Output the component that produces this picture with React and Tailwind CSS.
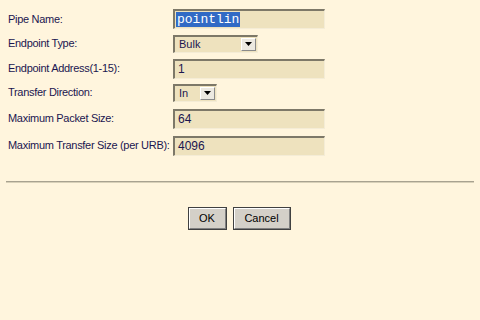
import React from "react";

function Field({ children, w = "w-[152px]" }) {
  return (
    <div className={`${w} h-[20px] bg-[#EEE2BE] border-t-2 border-l-2 border-[#7d7868] border-b border-r border-b-[#f4ecd6] border-r-[#f4ecd6] flex items-center pl-[1px] text-[12px] text-[#1b1650]`}>
      {children}
    </div>
  );
}

function Select({ value, w }) {
  return (
    <div className={`${w} h-[18px] bg-[#EEE2BE] border-t-2 border-l-2 border-[#7d7868] border-b border-r border-b-[#f4ecd6] border-r-[#f4ecd6] flex items-center justify-between text-[11px] text-[#1b1650]`}>
      <span className="pl-[4px]">{value}</span>
      <div className="w-[15px] h-[13px] mr-[1px] bg-[#ECE9E1] border border-t-[#fff] border-l-[#fff] border-b-[#8a8a8a] border-r-[#8a8a8a] flex items-center justify-center">
        <svg width="7" height="4" viewBox="0 0 7 4"><path d="M0 0H7L3.5 4Z" fill="#000" /></svg>
      </div>
    </div>
  );
}

function Button({ children, w }) {
  return (
    <div className={`${w} h-[23px] bg-[#D4D0C8] border border-[#404040] flex`}>
      <div className="flex-1 border-t border-l border-t-white border-l-white border-b border-r border-b-[#808080] border-r-[#808080] flex items-center justify-center text-[11px] text-black">
        {children}
      </div>
    </div>
  );
}

export default function App() {
  const font = { fontFamily: "'Liberation Sans', Arial, sans-serif" };
  const rows = [
    { label: "Pipe Name:", h: "h-[26px]", el: (
      <Field><span className="bg-[#316AC5] text-white leading-[15px] px-[1px]" style={{ fontFamily: "'Liberation Mono', 'Courier New', monospace", fontSize: "13px" }}>pointlin</span></Field>
    ) },
    { label: "Endpoint Type:", h: "h-[23px]", el: <Select value="Bulk" w="w-[85px]" /> },
    { label: "Endpoint Address(1-15):", h: "h-[27px]", el: <Field><span className="pl-[2px]">1</span></Field> },
    { label: "Transfer Direction:", h: "h-[21px]", el: <Select value="In" w="w-[44px]" /> },
    { label: "Maximum Packet Size:", h: "h-[31px]", el: <Field><span className="pl-[2px]">64</span></Field> },
    { label: "Maximum Transfer Size (per URB):", h: "h-[23px]", el: <Field><span className="pl-[2px]">4096</span></Field> },
  ];
  return (
    <div className="w-[480px] h-[320px] bg-[#FFF5DD] text-[11px] text-[#1b1650] overflow-hidden" style={font}>
      <div className="pt-[6px]">
        {rows.map((r, i) => (
          <div key={i} className={`${r.h} flex items-center`}>
            <div className="w-[173px] shrink-0 pl-[8px] whitespace-nowrap tracking-[-0.3px]">{r.label}</div>
            {r.el}
          </div>
        ))}
      </div>
      <div className="mt-[24px] mx-[6px] h-[2px] border-t border-t-[#a8a290] border-b border-b-[#d8d0b8]" />
      <div className="mt-[24px] flex justify-center gap-[6px] pr-[2px]">
        <Button w="w-[39px]">OK</Button>
        <Button w="w-[58px]">Cancel</Button>
      </div>
    </div>
  );
}
